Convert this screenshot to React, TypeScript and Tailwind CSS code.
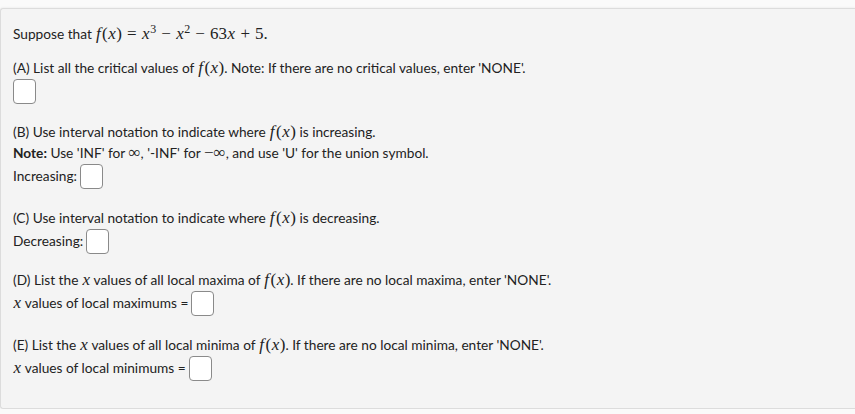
import React from "react";

function Box() {
  return (
    <span className="inline-block w-[23px] h-[25px] align-middle rounded-[4px] border border-[#8a8a8a] bg-white" />
  );
}

function M({ children }: { children: React.ReactNode }) {
  return (
    <span className="font-['Liberation_Serif',serif] text-[17px] leading-none">
      {children}
    </span>
  );
}

function I({ children }: { children: React.ReactNode }) {
  return <i className="font-['Liberation_Serif',serif] italic mx-[0.5px]">{children}</i>;
}

function Op({ children }: { children: React.ReactNode }) {
  return <span className="mx-[5px]">{children}</span>;
}

const fx = (
  <M>
    <I>f</I>
    <span className="ml-[1px]">(</span>
    <I>x</I>)
  </M>
);

export default function App() {
  return (
    <div className="min-h-[414px] bg-[#fafafa] pt-2 font-['Lato',sans-serif] text-[13.7px] text-[#222]">
      <div className="h-[401px] rounded-l-[3px] border border-r-0 border-[#dcdcdc] bg-[#f4f4f4] pl-[12px] pt-[14px] shadow-[0_-1px_2px_rgba(0,0,0,0.04)]">
        <p className="leading-[21px]">
          Suppose that{" "}
          <M>
            {fx}
            <Op>=</Op>
            <I>x</I>
            <sup className="text-[12px]">3</sup>
            <Op>−</Op>
            <I>x</I>
            <sup className="text-[12px]">2</sup>
            <Op>−</Op>
            63<I>x</I>
            <Op>+</Op>5.
          </M>
        </p>

        <div className="mt-[13px]">
          <p className="leading-[21px]">
            (A) List all the critical values of {fx}. Note: If there are no critical
            values, enter 'NONE'.
          </p>
          <div className="h-[26px] flex items-center">
            <Box />
          </div>
        </div>

        <div className="mt-[17px]">
          <p className="leading-[21px]">
            (B) Use interval notation to indicate where {fx} is increasing.
          </p>
          <p className="leading-[21px]">
            <b>Note:</b> Use 'INF' for <M>∞</M>, '-INF' for <M>−∞</M>, and use 'U' for
            the union symbol.
          </p>
          <div className="h-[26px] flex items-center gap-[3px]">
            Increasing: <Box />
          </div>
        </div>

        <div className="mt-[18px]">
          <p className="leading-[21px]">
            (C) Use interval notation to indicate where {fx} is decreasing.
          </p>
          <div className="h-[26px] flex items-center gap-[3px]">
            Decreasing: <Box />
          </div>
        </div>

        <div className="mt-[15px]">
          <p className="leading-[21px]">
            (D) List the <M><I>x</I></M> values of all local maxima of {fx}. If there
            are no local maxima, enter 'NONE'.
          </p>
          <div className="h-[26px] flex items-center gap-[3px]">
            <span>
              <M><I>x</I></M> values of local maximums =
            </span>
            <Box />
          </div>
        </div>

        <div className="mt-[18px]">
          <p className="leading-[21px]">
            (E) List the <M><I>x</I></M> values of all local minima of {fx}. If there
            are no local minima, enter 'NONE'.
          </p>
          <div className="h-[26px] flex items-center gap-[3px]">
            <span>
              <M><I>x</I></M> values of local minimums =
            </span>
            <Box />
          </div>
        </div>
      </div>
    </div>
  );
}
